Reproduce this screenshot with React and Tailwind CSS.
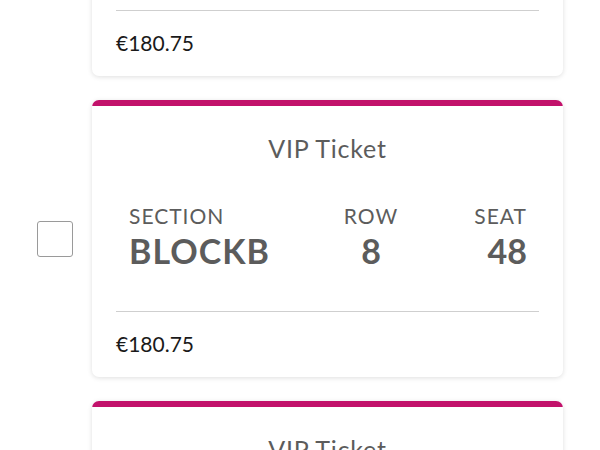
import React from "react"

const tickets = [
    { id: 1, title: "VIP Ticket", section: "BLOCKB", row: "8", seat: "48", price: "€180.75" },
    { id: 2, title: "VIP Ticket", section: "BLOCKB", row: "8", seat: "48", price: "€180.75" },
    { id: 3, title: "VIP Ticket", section: "BLOCKB", row: "8", seat: "48", price: "€180.75" },
];

function TicketCard({ ticket }) {
    return (
        <div className="flex flex-row items-center">
            <div className="w-[92px] pl-[37px]">
                <div className="w-[36px] h-[36px] rounded-[3px] border border-[#9a9a9a] bg-white"></div>
            </div>
            <div className="w-[471px] h-[277px] bg-white rounded-[7px] overflow-hidden shadow-[0_1px_5px_rgba(0,0,0,0.13)] flex flex-col">
                <div className="h-[6px] bg-[#c2126b]"></div>
                <p className="mt-[28px] text-center text-[25px] leading-[28px] tracking-[0.8px] text-[#5c5c5c]">{ticket.title}</p>
                <div className="flex flex-row pl-[37px] pr-[36px] mt-[42px] text-[#5c5c5c]">
                    <div className="flex-1 flex flex-col">
                        <span className="text-[21px] leading-[24px] tracking-[1px]">SECTION</span>
                        <span className="mt-[2px] text-[34px] leading-[42px] font-bold tracking-[1px]">{ticket.section}</span>
                    </div>
                    <div className="w-[104px] flex flex-col items-center">
                        <span className="text-[21px] leading-[24px] tracking-[1px]">ROW</span>
                        <span className="mt-[2px] text-[34px] leading-[42px] font-bold">{ticket.row}</span>
                    </div>
                    <div className="w-[104px] flex flex-col items-end">
                        <span className="text-[21px] leading-[24px] tracking-[1px]">SEAT</span>
                        <span className="mt-[2px] text-[34px] leading-[42px] font-bold">{ticket.seat}</span>
                    </div>
                </div>
                <div className="mx-[24px] mt-auto border-t border-[#cfcfcf]"></div>
                <p className="px-[24px] h-[65px] flex items-center pb-[1px] text-[21px] text-[#1a1a1a]">{ticket.price}</p>
            </div>
        </div>
    );
}

export default function App() {
    return (
        <div className="w-[600px] h-[450px] overflow-hidden bg-white font-['Lato',sans-serif]">
            <div className="mt-[-201px] flex flex-col gap-[24px]">
                {tickets.map((t) => (
                    <TicketCard key={t.id} ticket={t} />
                ))}
            </div>
        </div>
    );
}
